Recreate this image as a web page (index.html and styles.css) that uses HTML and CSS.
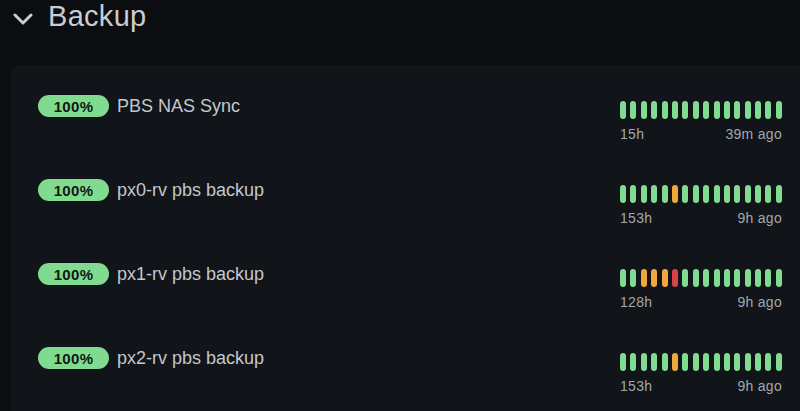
FILE: index.html
```html
<!DOCTYPE html>
<html>
<head>
<meta charset="utf-8">
<link rel="stylesheet" href="styles.css">
</head>
<body>
<div class="page">
  <div class="group-header">
    <svg class="chevron" width="20" height="12" viewBox="0 0 20 12"><path d="M2 2 L10 10 L18 2" fill="none" stroke="#c9ccd1" stroke-width="3" stroke-linecap="round" stroke-linejoin="round"/></svg>
    <h2 class="group-title">Backup</h2>
  </div>
  <div class="card">
    <div class="row">
      <div class="left"><span class="badge">100%</span><span class="name">PBS NAS Sync</span></div>
      <div class="right">
        <div class="bars"><i class="g"></i><i class="g"></i><i class="g"></i><i class="g"></i><i class="g"></i><i class="g"></i><i class="g"></i><i class="g"></i><i class="g"></i><i class="g"></i><i class="g"></i><i class="g"></i><i class="g"></i><i class="g"></i><i class="g"></i><i class="g"></i></div>
        <div class="times"><span>15h</span><span>39m ago</span></div>
      </div>
    </div>
    <div class="row">
      <div class="left"><span class="badge">100%</span><span class="name">px0-rv pbs backup</span></div>
      <div class="right">
        <div class="bars"><i class="g"></i><i class="g"></i><i class="g"></i><i class="g"></i><i class="g"></i><i class="o"></i><i class="g"></i><i class="g"></i><i class="g"></i><i class="g"></i><i class="g"></i><i class="g"></i><i class="g"></i><i class="g"></i><i class="g"></i><i class="g"></i></div>
        <div class="times"><span>153h</span><span>9h ago</span></div>
      </div>
    </div>
    <div class="row">
      <div class="left"><span class="badge">100%</span><span class="name">px1-rv pbs backup</span></div>
      <div class="right">
        <div class="bars"><i class="g"></i><i class="g"></i><i class="o"></i><i class="o"></i><i class="o"></i><i class="r"></i><i class="g"></i><i class="g"></i><i class="g"></i><i class="g"></i><i class="g"></i><i class="g"></i><i class="g"></i><i class="g"></i><i class="g"></i><i class="g"></i></div>
        <div class="times"><span>128h</span><span>9h ago</span></div>
      </div>
    </div>
    <div class="row">
      <div class="left"><span class="badge">100%</span><span class="name">px2-rv pbs backup</span></div>
      <div class="right">
        <div class="bars"><i class="g"></i><i class="g"></i><i class="g"></i><i class="g"></i><i class="g"></i><i class="o"></i><i class="g"></i><i class="g"></i><i class="g"></i><i class="g"></i><i class="g"></i><i class="g"></i><i class="g"></i><i class="g"></i><i class="g"></i><i class="g"></i></div>
        <div class="times"><span>153h</span><span>9h ago</span></div>
      </div>
    </div>
  </div>
</div>
</body>
</html>
```
FILE: styles.css
```css
html, body {
  margin: 0;
  padding: 0;
  background: #0b0d11;
  overflow: hidden;
  font-family: "Liberation Sans", Arial, sans-serif;
}
.page {
  width: 800px;
  height: 411px;
  overflow: hidden;
}
.group-header {
  display: flex;
  align-items: center;
  height: 34px;
  margin-top: -1px;
  padding-left: 13px;
  gap: 15px;
}
.chevron {
  display: block;
  margin-top: 5px;
}
.group-title {
  margin: 0;
  font-size: 29px;
  font-weight: 400;
  color: #c9ccd1;
  line-height: 34px;
  letter-spacing: 0.3px;
}
.card {
  margin: 32px -30px 0 10px;
  background: #111419;
  border-radius: 9px;
  padding: 30px 48px 0 28px;
  display: flex;
  flex-direction: column;
  gap: 36px;
  height: 400px;
}
.row {
  display: flex;
  justify-content: space-between;
  align-items: flex-start;
}
.left {
  display: flex;
  align-items: center;
  gap: 8px;
}
.badge {
  display: inline-flex;
  align-items: center;
  justify-content: center;
  width: 71px;
  height: 22px;
  border-radius: 11px;
  background: #80db91;
  color: #0e1a12;
  font-weight: 700;
  font-size: 15px;
  letter-spacing: 0.3px;
}
.name {
  font-size: 18px;
  color: #c4c7cc;
  padding-top: 1px;
}
.right {
  width: 162px;
  padding-top: 6px;
}
.bars {
  display: flex;
  justify-content: space-between;
  height: 18px;
}
.bars i {
  display: block;
  width: 6px;
  height: 18px;
  border-radius: 3px;
}
.bars .g { background: #80db91; }
.bars .o { background: #efa83c; }
.bars .r { background: #d8434a; }
.times {
  display: flex;
  justify-content: space-between;
  margin-top: 7px;
  font-size: 14px;
  line-height: 17px;
  color: #a3a7ad;
  letter-spacing: 0.3px;
}
```
